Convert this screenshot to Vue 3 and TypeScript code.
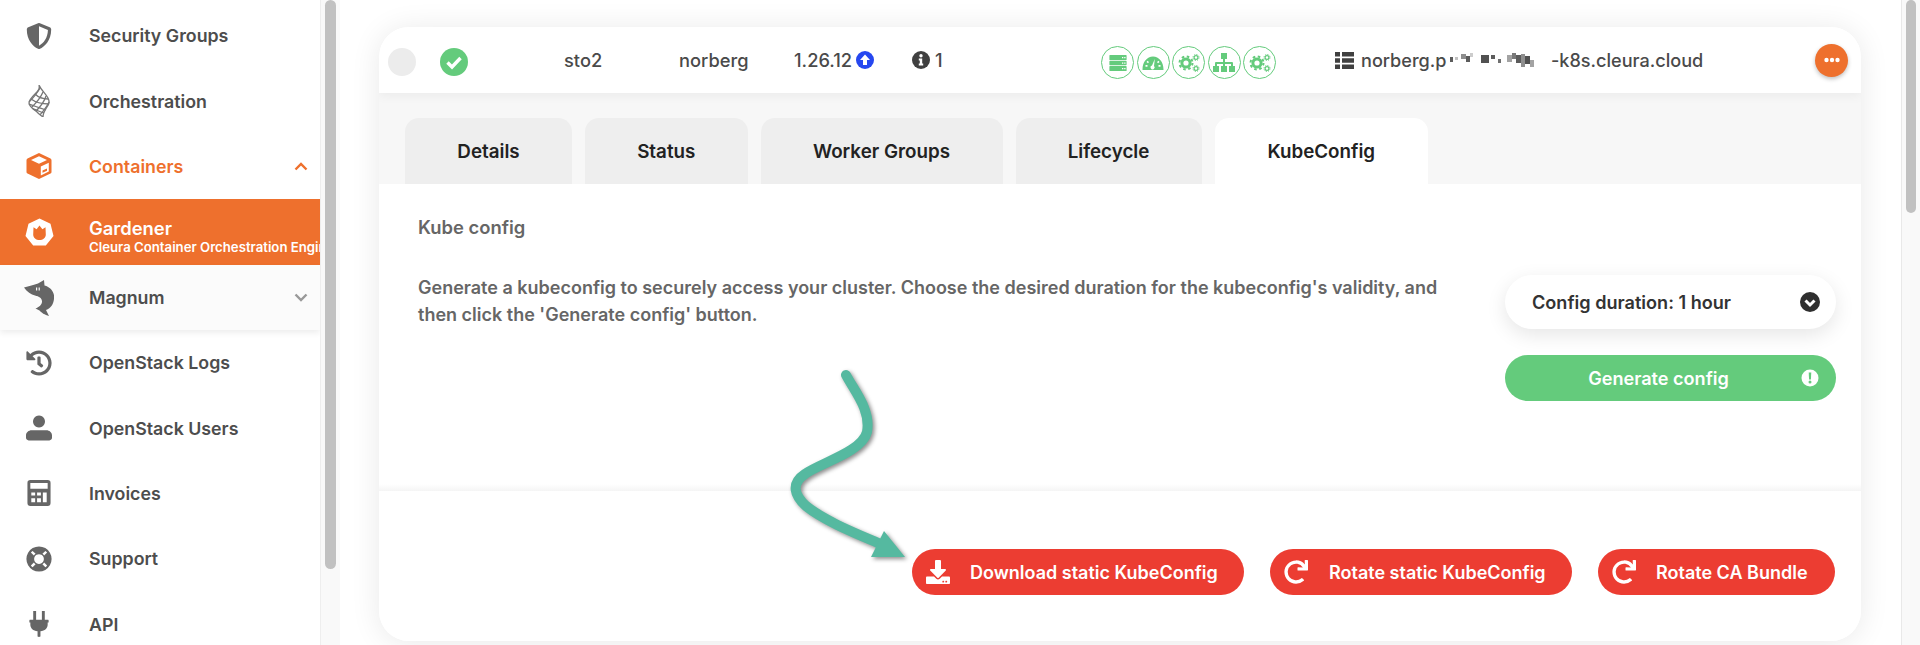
<script setup lang="ts">
interface NavItem { label: string; d: string; vb: string; cls?: string; chev?: 'up' | 'down' }

const shield = 'M466.5 83.7l-192-80a48.15 48.15 0 0 0-36.9 0l-192 80C27.7 91.1 16 108.6 16 128c0 198.5 114.5 335.7 221.5 380.3 11.8 4.9 25.1 4.9 36.9 0C360.1 472.6 496 349.3 496 128c0-19.4-11.7-36.9-29.5-44.3zM256.1 446.3l-.1-381 175.9 73.3c-3.3 151.4-82.1 261.1-175.8 307.7z'
const history = 'M504 255.531c.253 136.64-111.18 248.372-247.82 248.468-59.015.042-113.223-20.53-155.822-54.911-11.077-8.94-11.905-25.541-1.839-35.607l11.267-11.267c8.609-8.609 22.353-9.551 31.891-1.984C173.062 425.135 212.781 440 256 440c101.705 0 184-82.311 184-184 0-101.705-82.311-184-184-184-48.814 0-93.149 18.969-126.068 49.932l50.754 50.754c10.08 10.08 2.941 27.314-11.313 27.314H24c-8.837 0-16-7.163-16-16V38.627c0-14.254 17.234-21.393 27.314-11.314l49.372 49.372C129.209 34.136 189.552 8 256 8c136.81 0 247.747 110.78 248 247.531zm-180.912 78.784l9.823-12.63c8.138-10.463 6.253-25.542-4.21-33.679L288 256.349V152c0-13.255-10.745-24-24-24h-16c-13.255 0-24 10.745-24 24v135.651l65.409 50.874c10.463 8.137 25.541 6.253 33.679-4.21z'
const redo = 'M500.33 0h-47.41a12 12 0 0 0-12 12.57l4 82.76A247.42 247.42 0 0 0 256 8C119.34 8 7.9 119.53 8 256.19 8.1 393.07 119.1 504 256 504a247.1 247.1 0 0 0 166.18-63.91 12 12 0 0 0 .48-17.43l-34-34a12 12 0 0 0-16.38-.55A176 176 0 1 1 402.1 157.8l-101.53-4.87a12 12 0 0 0-12.57 12v47.41a12 12 0 0 0 12 12h200.33a12 12 0 0 0 12-12V12a12 12 0 0 0-12-12z'
const download = 'M216 0h80c13.3 0 24 10.7 24 24v168h87.7c17.8 0 26.7 21.5 14.1 34.1L269.7 378.3c-7.5 7.5-19.8 7.5-27.3 0L90.1 226.1c-12.6-12.6-3.7-34.1 14.1-34.1H192V24c0-13.3 10.7-24 24-24zm296 376v112c0 13.3-10.7 24-24 24H24c-13.3 0-24-10.7-24-24V376c0-13.3 10.7-24 24-24h146.7l49 49c20.1 20.1 52.5 20.1 72.6 0l49-49H488c13.3 0 24 10.7 24 24zm-124 88c0-11-9-20-20-20s-20 9-20 20 9 20 20 20 20-9 20-20zm64 0c0-11-9-20-20-20s-20 9-20 20 9 20 20 20 20-9 20-20z'

const meshLines = [
  'M11 0C12 4 10 6 7 9 4 12 1 15 1 18 1 22 7 25 10 28 12 30 14 31 15 32 15 28 17 25 19 22 21 19 22 17 20 13 18 9 13 5 11 0Z',
  'M1 17C5 13 9 9 12 3',
  'M4 22C8 18 12 14 15 7',
  'M8 26C12 22 16 18 18 11',
  'M12 30C15 26 19 22 21 17',
  'M7 9C10 12 14 14 20 14',
  'M3 14C7 17 13 19 21 19',
  'M1 19C6 21 12 23 18 25',
  'M5 24C9 25 12 27 16 28',
]
const containers = 'M12.5 0 1 5.5 Q0 6 0 7.2 V19 Q0 20 1 20.5 L12.5 26 24 20.5 Q25 20 25 19 V7.2 Q25 6 24 5.5ZM12.5 3.2 20.5 7 12.5 10.8 4.5 7ZM14.3 13.5 22.3 9.7 V18.6 L14.3 22.4ZM16 17.5 V19.8 L20.5 17.7 V15.4Z'
const gardenerIcon = 'M14.5 0.5 25.5 5.8 28.5 18 20.8 27.6 8.2 27.6 0.5 18 3.5 5.8ZM14.5 7.5 11.6 11.3 8.5 9.3 8.2 16.5C8.2 20 11 22 14.5 22S20.8 20 20.8 16.5L20.5 9.3 17.4 11.3Z'
const shark = 'M0 8.5C5 7 10 6 14 4.500L20 1 20.500 6.500C27 8 31 14 30 20 29.500 25 27 29 22 31L25 37C21 36 17 33.500 15.500 31.500L11.500 29.500C15 28 18 26 18 22.500 18 19 15 17.500 11 16.500 7 15.500 3 13 0 8.5ZM12 8.500H13.200V11.500H12ZM14.600 8.500H15.800V11.500H14.600Z'
const topItems: NavItem[] = [
  { label: 'Security Groups', d: shield, vb: '0 0 512 512' },
]
const bottomItems: NavItem[] = [
  { label: 'OpenStack Logs', d: history, vb: '0 0 512 512' },
  { label: 'OpenStack Users', d: 'M256 10a118 118 0 1 0 .1 0ZM110 300H402C460 300 512 345 512 400V450C512 480 490 500 460 500H52C22 500 0 480 0 450V400C0 345 52 300 110 300Z', vb: '0 0 512 512' },
  { label: 'Invoices', d: 'M3 0H21Q24 0 24 3V24Q24 27 21 27H3Q0 27 0 24V3Q0 0 3 0ZM3 3V9H21V3ZM4 13V16H8V13ZM10 13V16H14V13ZM16 13V23H20V13ZM4 19V23H8V19ZM10 19V23H14V19Z', vb: '0 0 24 27' },
  { label: 'Support', d: 'M256 8a248 248 0 1 0 .1 0ZM256 160a96 96 0 1 1-.1 0ZM96 130 155 189A130 130 0 0 1 189 155L130 96A190 190 0 0 0 96 130ZM416 130A190 190 0 0 0 382 96L323 155A130 130 0 0 1 357 189ZM416 382 357 323A130 130 0 0 1 323 357L382 416A190 190 0 0 0 416 382ZM96 382A190 190 0 0 0 130 416L189 357A130 130 0 0 1 155 323Z', vb: '0 0 512 512' },
  { label: 'API', d: 'M4 0H7V9H13V0H16V9H19.5Q20 9 20 10V12H19V14C19 18 16 20.5 11.5 21V26.5Q10 27.5 8.5 26.5V21C4 20.5 1 18 1 14V12H0V10Q0 9 .5 9H4Z', vb: '0 0 20 27' },
]
const tabs = ['Details', 'Status', 'Worker Groups', 'Lifecycle', 'KubeConfig']
// gap before, width, top, height, opacity of each mosaic block over the hidden part of the address
const redactions = [
  [0, 3, 9, 5, 0.8], [2, 3, 9, 3, 0.3], [3, 5, 6, 5, 0.55], [0, 4, 8, 6, 0.8], [0, 3, 5, 4, 0.25],
  [8, 8, 7, 8, 0.85], [2, 4, 7, 4, 0.8], [3, 3, 11, 4, 0.7],
  [6, 5, 7, 7, 0.45], [0, 4, 5, 6, 0.65], [0, 5, 7, 8, 0.8], [0, 4, 6, 13, 0.55], [0, 5, 8, 8, 0.85], [0, 4, 12, 7, 0.45],
]
const rotateButtons = [
  { label: 'Rotate static KubeConfig', cls: 'btn-static' },
  { label: 'Rotate CA Bundle', cls: 'btn-ca' },
]
const gearTeeth = (r: number) => `${(Math.PI * 2 * r) / 16} ${(Math.PI * 2 * r) / 16}`
</script>

<template>
  <div class="page">
    <aside class="sidebar">
      <a v-for="item in topItems" :key="item.label" class="nav-row">
        <span class="nav-icon"><svg :viewBox="item.vb"><path :d="item.d" fill="currentColor" fill-rule="evenodd" /></svg></span>
        <span class="nav-label">{{ item.label }}</span>
      </a>
      <a class="nav-row">
        <span class="nav-icon"><svg class="mesh" viewBox="0 0 22 32"><path v-for="(l, i) in meshLines" :key="i" :d="l" /></svg></span>
        <span class="nav-label">Orchestration</span>
      </a>
      <a class="nav-row orange">
        <span class="nav-icon"><svg viewBox="0 0 25 26"><path :d="containers" fill="currentColor" fill-rule="evenodd" /></svg></span>
        <span class="nav-label">Containers</span>
        <svg class="chev" viewBox="0 0 14 9"><path d="M1.5 7.5 7 2l5.500 5.500" /></svg>
      </a>
      <a class="nav-row active">
        <span class="nav-icon gardener"><svg viewBox="0 0 29 28"><path :d="gardenerIcon" fill="#fff" fill-rule="evenodd" /></svg></span>
        <span class="nav-text">
          <span class="nav-title">Gardener</span>
          <span class="nav-sub">Cleura Container Orchestration Engine</span>
        </span>
      </a>
      <a class="nav-row magnum">
        <span class="nav-icon shark"><svg viewBox="0 0 30 37"><path :d="shark" fill="currentColor" fill-rule="evenodd" /></svg></span>
        <span class="nav-label">Magnum</span>
        <svg class="chev grey" viewBox="0 0 14 9"><path d="M1.5 1.500 7 7l5.500-5.500" /></svg>
      </a>
      <a v-for="item in bottomItems" :key="item.label" class="nav-row">
        <span class="nav-icon"><svg :viewBox="item.vb"><path :d="item.d" fill="currentColor" fill-rule="evenodd" /></svg></span>
        <span class="nav-label">{{ item.label }}</span>
      </a>
    </aside>
    <div class="side-scroll"><div class="thumb side-thumb"></div></div>

    <main class="main">
      <section class="card">
        <header class="head">
          <span class="radio"></span>
          <svg class="ok" viewBox="0 0 28 28"><circle cx="14" cy="14" r="14" fill="#64cb7c" /><path d="M7.500 14.500 12 19l8.500-9" fill="none" stroke="#fff" stroke-width="3.400" /></svg>
          <span class="cell region">sto2</span>
          <span class="cell project">norberg</span>
          <span class="cell version">1.26.12</span>
          <svg class="up" viewBox="0 0 18 18"><circle cx="9" cy="9" r="9" fill="#2647f0" /><path d="M9 3.500 14 9h-3v5H7V9H4Z" fill="#fff" /></svg>
          <svg class="info" viewBox="0 0 18 18"><circle cx="9" cy="9" r="9" fill="#404040" /><circle cx="9" cy="4.800" r="1.700" fill="#fff" /><path d="M6.800 7.500h3.400v5h1v2H6.800v-2h1v-3h-1Z" fill="#fff" /></svg>
          <span class="cell count">1</span>
          <div class="status-icons">
            <span class="status"><svg viewBox="0 0 24 24"><path fill-rule="evenodd" d="M4 4h16q.6 0 .6.6V8.400q0 .6-.6.600H4q-.6 0-.6-.6V4.600Q3.400 4 4 4Zm12 2v1.300h1.300V6Zm2.200 0v1.300h1.300V6ZM4 9.800h16q.6 0 .6.6v3.200q0 .6-.6.6H4q-.6 0-.6-.6v-3.200q0-.6.6-.6Zm12 1.600v1.300h1.300v-1.300Zm2.200 0v1.300h1.300v-1.300ZM4 15h16q.6 0 .6.6v3.800q0 .6-.6.600H4q-.6 0-.6-.6v-3.800q0-.6.6-.6Zm12 2v1.300h1.300V17Zm2.200 0v1.300h1.300V17Z" /></svg></span>
            <span class="status"><svg viewBox="0 0 24 24"><path fill-rule="evenodd" d="M1.500 18.500C1.500 11 6 5.500 12 5.500S22.500 11 22.500 18.500q0 .5-.5.5H2q-.5 0-.5-.5ZM13.800 8 11 14.500a2 2 0 1 0 2 .5ZM4.500 14v1.800h2V14Zm13 0v1.800h2V14ZM6.500 9.800 5.500 11l1.500 1.200 1-1.200Zm11 0L16 11l1 1.200 1.500-1.200Z" /></svg></span>
            <span class="status">
              <svg viewBox="0 0 24 24" class="gears"><circle cx="9" cy="12" r="4.100" fill="none" stroke-width="3" /><circle cx="9" cy="12" r="6.500" fill="none" stroke-width="2" :stroke-dasharray="gearTeeth(6.500)" /><circle cx="19" cy="6.500" r="1.900" fill="none" stroke-width="1.200" /><circle cx="19" cy="6.500" r="3" fill="none" stroke-width="1" :stroke-dasharray="gearTeeth(3)" /><circle cx="19" cy="17.500" r="1.900" fill="none" stroke-width="1.200" /><circle cx="19" cy="17.500" r="3" fill="none" stroke-width="1" :stroke-dasharray="gearTeeth(3)" /></svg>
            </span>
            <span class="status"><svg viewBox="0 0 24 24"><path d="M9 2h6v6h-2v3h7q1 0 1 1v3h2v6h-6v-6h2v-2h-6v2h2v6H9v-6h2v-2H5v2h2v6H1v-6h2v-3q0-1 1-1h7V8H9Z" /></svg></span>
            <span class="status">
              <svg viewBox="0 0 24 24" class="gears"><circle cx="9" cy="12" r="4.100" fill="none" stroke-width="3" /><circle cx="9" cy="12" r="6.500" fill="none" stroke-width="2" :stroke-dasharray="gearTeeth(6.500)" /><circle cx="19" cy="6.500" r="1.900" fill="none" stroke-width="1.200" /><circle cx="19" cy="6.500" r="3" fill="none" stroke-width="1" :stroke-dasharray="gearTeeth(3)" /><circle cx="19" cy="17.500" r="1.900" fill="none" stroke-width="1.200" /><circle cx="19" cy="17.500" r="3" fill="none" stroke-width="1" :stroke-dasharray="gearTeeth(3)" /></svg>
            </span>
          </div>
          <svg class="list" viewBox="0 0 19 17"><path d="M0 0h5v4.500H0Zm7 0h12v4.500H7ZM0 6.200h5v4.600H0Zm7 0h12v4.600H7ZM0 12.500h5V17H0Zm7 0h12V17H7Z" fill="#404040" /></svg>
          <span class="cell url"><span class="url-a">norberg.p</span><span class="redact"><i v-for="(r, i) in redactions" :key="i" :style="{ marginLeft: r[0] + 'px', width: r[1] + 'px', marginTop: r[2] + 'px', height: r[3] + 'px', opacity: r[4] }"></i></span><span>-k8s.cleura.cloud</span></span>
          <button class="more"><svg viewBox="0 0 16 6"><circle cx="2.500" cy="3" r="2.200" /><circle cx="8" cy="3" r="2.200" /><circle cx="13.500" cy="3" r="2.200" /></svg></button>
        </header>

        <nav class="tabs">
          <button v-for="(tab, i) in tabs" :key="tab" class="tab" :class="['tab-' + i, { current: tab === 'KubeConfig' }]">{{ tab }}</button>
        </nav>

        <div class="panel">
          <div class="panel-copy">
            <h3>Kube config</h3>
            <p>Generate a kubeconfig to securely access your cluster. Choose the desired duration for the kubeconfig's validity, and then click the 'Generate config' button.</p>
          </div>
          <div class="panel-side">
            <div class="select">
              <span>Config duration: 1 hour</span>
              <svg viewBox="0 0 20 20"><circle cx="10" cy="10" r="10" fill="#2f2f2f" /><path d="M5.500 8.500 10 13l4.500-4.500" fill="none" stroke="#fff" stroke-width="3" /></svg>
            </div>
            <button class="generate">
              <span>Generate config</span>
              <svg viewBox="0 0 18 18"><circle cx="9" cy="9" r="8.500" fill="#fff" /><path d="M7.700 3.500h2.600l-.4 7H8.100Z" fill="#64cb7c" /><circle cx="9" cy="13" r="1.500" fill="#64cb7c" /></svg>
            </button>
          </div>
        </div>
        <div class="band"></div>
        <footer class="actions">
          <button class="danger btn-download">
            <svg viewBox="0 0 512 512"><path :d="download" fill="#fff" /></svg>
            <span>Download static KubeConfig</span>
          </button>
          <button v-for="b in rotateButtons" :key="b.label" class="danger" :class="b.cls">
            <svg viewBox="0 0 512 512"><path :d="redo" fill="#fff" /></svg>
            <span>{{ b.label }}</span>
          </button>
        </footer>
      </section>
    </main>
    <div class="main-scroll"><div class="thumb main-thumb"></div></div>

    <svg class="arrow" viewBox="0 0 150 210" aria-hidden="true">
      <path d="M56 15C65 32 81 50 77 72 72 92 30 103 15 114 0 124 5 136 16 146 36 162 70 175 93 185" fill="none" stroke="#55b9a0" stroke-width="10" stroke-linecap="round" />
      <path d="M94 171 115 197 81 197Z" fill="#55b9a0" />
    </svg>
  </div>
</template>

<style>
html, body { margin: 0; background: #fff; overflow: hidden; }
</style>

<style scoped>
* { box-sizing: border-box; }
.page {
  position: relative;
  display: flex;
  width: 1920px;
  height: 645px;
  overflow: hidden;
  font-family: Inter, "Liberation Sans", sans-serif;
  color: #4a4a4a;
  background: #fff;
}
.sidebar {
  width: 320px;
  flex: none;
  padding-top: 3px;
  background: #fff;
  overflow: hidden;
}
.nav-row {
  display: flex;
  align-items: center;
  height: 65.400px;
  padding-left: 25px;
  font-size: 17.800px;
  font-weight: 600;
  color: #4d4d4d;
}
.nav-icon {
  width: 28px;
  height: 32px;
  margin-right: 36px;
  flex: none;
  display: flex;
  align-items: center;
  justify-content: center;
  color: #666;
}
.nav-icon svg { width: 26px; height: 26px; flex: none; }
.nav-icon svg.mesh { width: 22px; height: 32px; fill: none; stroke: #777; stroke-width: 1.300; }
.nav-label { flex: 1; }
.orange, .orange .nav-icon { color: #ee702d; }
.chev { width: 14px; height: 9px; margin-right: 12px; fill: none; stroke: #ee702d; stroke-width: 2.400; }
.chev.grey { stroke: #999; }
.active { background: #ee702d; color: #fff; white-space: nowrap; overflow: hidden; }
.nav-icon.gardener svg { width: 29px; height: 28px; }
.nav-text { display: flex; flex-direction: column; padding-top: 9px; }
.nav-title { font-size: 18.400px; line-height: 22px; }
.nav-sub { font-size: 13.200px; line-height: 16px; }
.magnum { background: #fbfbfb; box-shadow: 0 3px 6px rgba(0, 0, 0, .07); position: relative; }
.nav-icon.shark svg { width: 30px; height: 37px; }
.side-scroll { width: 20px; flex: none; background: #f9f9f9; border-left: 1px solid #eee; padding-left: 4px; }
.thumb { background: #c1c1c1; border-radius: 6px; }
.side-thumb { width: 11px; height: 569px; }
.main { flex: 1; min-width: 0; padding: 27px 40px 0 39px; background: #fff; }
.main-scroll { width: 19px; flex: none; background: #f9f9f9; border-left: 1px solid #e9e9e9; padding-left: 4px; }
.main-thumb { width: 10px; height: 213px; }
.card {
  height: 614px;
  display: flex;
  flex-direction: column;
  background: #fff;
  border-radius: 30px;
  overflow: hidden;
  box-shadow: 0 2px 30px rgba(0, 0, 0, .09);
}
.head {
  height: 66px;
  flex: none;
  display: flex;
  align-items: center;
  padding-left: 9px;
  background: #fff;
  box-shadow: 0 3px 10px rgba(0, 0, 0, .05);
  position: relative;
  font-size: 18.300px;
  font-weight: 500;
  color: #4a4a4a;
}
.radio { width: 28px; height: 28px; border-radius: 50%; background: #ececec; flex: none; margin-top: 3px; }
.ok { width: 28px; height: 28px; margin-left: 24px; flex: none; margin-top: 3px; }
.cell { white-space: nowrap; flex: none; }
.region { margin-left: 96px; width: 115px; }
.project { width: 115px; }
.version { width: 57px; }
.up { width: 18px; height: 18px; margin-left: 5px; flex: none; }
.info { width: 18px; height: 18px; margin-left: 38px; flex: none; }
.count { margin-left: 5px; width: 8px; }
.status-icons { display: flex; gap: 2.500px; margin-left: 158px; margin-top: 5px; flex: none; }
.status {
  width: 33px;
  height: 33px;
  border: 1.500px solid #64cb7c;
  border-radius: 50%;
  display: flex;
  align-items: center;
  justify-content: center;
}
.status svg { width: 24px; height: 24px; fill: #64cb7c; }
.gears { stroke: #64cb7c; }
.list { width: 19px; height: 17px; margin-left: 59px; flex: none; }
.url { margin-left: 7px; display: flex; line-height: 24px; font-size: 18.100px; }
.url-a { width: 89px; }
.redact { display: flex; width: 101px; align-items: flex-start; }
.redact i { display: block; background: #333; flex: none; }
.more {
  width: 33px;
  height: 33px;
  margin-left: auto;
  margin-right: 13px;
  border: 0;
  padding: 0;
  border-radius: 50%;
  background: #ee702d;
  box-shadow: 0 2px 4px rgba(0, 0, 0, .25);
  display: flex;
  align-items: center;
  justify-content: center;
  flex: none;
}
.more svg { width: 16px; height: 6px; fill: #fff; }
.tabs {
  height: 91px;
  flex: none;
  display: flex;
  gap: 13px;
  padding: 25px 0 0 26px;
  background: #f7f7f7;
}
.tab {
  border: 0;
  padding: 0;
  height: 66px;
  border-radius: 14px 14px 0 0;
  background: #eee;
  font: 600 18.800px Inter, "Liberation Sans", sans-serif;
  color: #222;
}
.tab-0 { width: 167px; }
.tab-1 { width: 162.500px; }
.tab-2 { width: 242px; }
.tab-3 { width: 186px; }
.tab-4 { width: 213.500px; }
.tab.current { background: #fff; }
.panel { flex: 1; display: flex; padding: 33px 25px 0 39px; background: #fff; }
.panel-copy { width: 1040px; flex: none; color: #666; font-size: 18px; font-weight: 600; }
.panel-copy h3 { margin: 0 0 38px; font-size: 18.400px; font-weight: 600; line-height: 20px; }
.panel-copy p { margin: 0; line-height: 26.500px; }
.panel-side { margin-left: auto; width: 331px; padding-top: 58px; display: flex; flex-direction: column; gap: 26px; }
.select {
  height: 54px;
  border-radius: 27px;
  background: #fff;
  box-shadow: 0 6px 20px rgba(0, 0, 0, .1);
  display: flex;
  align-items: center;
  justify-content: space-between;
  padding: 0 16px 0 27px;
  font-size: 18.100px;
  font-weight: 600;
  color: #333;
}
.select svg { width: 20px; height: 20px; }
.generate {
  position: relative;
  height: 46px;
  border: 0;
  padding: 0 24px 0 0;
  border-radius: 23px;
  background: #64cb7c;
  color: #fff;
  font: 600 18.100px Inter, "Liberation Sans", sans-serif;
}
.generate svg { position: absolute; right: 17px; top: 14px; width: 18px; height: 18px; }
.band { height: 7px; flex: none; background: linear-gradient(#fff, #f5f5f5); }
.actions {
  height: 150px;
  flex: none;
  display: flex;
  justify-content: flex-end;
  gap: 26px;
  padding: 58px 26px 0 0;
  background: #fff;
}
.danger {
  height: 46px;
  border: 0;
  border-radius: 23px;
  background: #ec3d32;
  color: #fff;
  font: 600 18px Inter, "Liberation Sans", sans-serif;
  display: flex;
  align-items: center;
  padding: 0 0 0 14px;
  flex: none;
}
.danger svg { width: 24px; height: 24px; flex: none; }
.danger span { margin-left: 20px; white-space: nowrap; }
.btn-download { width: 332px; }
.btn-static { width: 302px; }
.btn-static span { margin-left: 21px; }
.btn-ca { width: 237px; }
.arrow {
  position: absolute;
  left: 790px;
  top: 360px;
  width: 150px;
  height: 210px;
  pointer-events: none;
  filter: drop-shadow(2px 2px 2px rgba(0, 0, 0, .45));
}
</style>
